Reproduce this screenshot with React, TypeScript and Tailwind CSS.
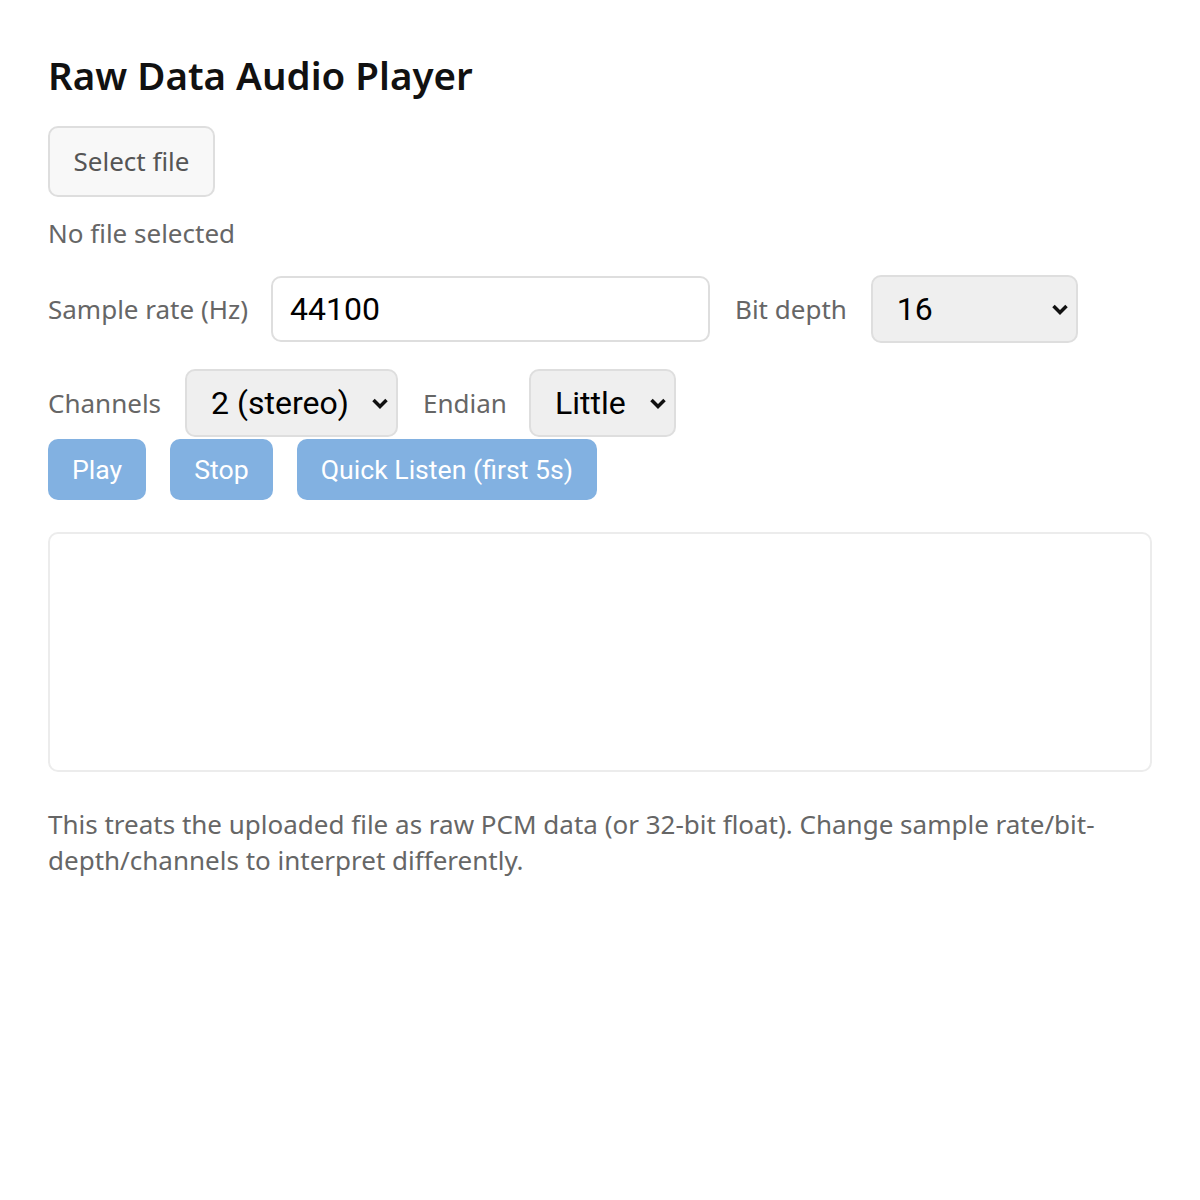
import { useState } from "react";

const label = "text-[26px] text-[#666] font-['Noto_Sans',sans-serif]";
const control = "font-['Roboto',sans-serif] text-[32px] text-black";

function Chevron() {
  return (
    <svg width="18" height="12" viewBox="0 0 18 12" className="pointer-events-none absolute right-[9px] top-1/2 -translate-y-1/2">
      <path d="M2.5 3 L9 9.5 L15.5 3" fill="none" stroke="#111" strokeWidth="3.5" />
    </svg>
  );
}

function Select({ value, options, width, onChange }: { value: string; options: string[]; width: string; onChange: (v: string) => void }) {
  return (
    <div className={`relative ${width}`}>
      <select
        value={value}
        onChange={(e) => onChange(e.target.value)}
        className={`${control} appearance-none w-full h-[68px] rounded-[10px] border-2 border-[#dedede] bg-[#efefef] pl-6 pr-10 outline-none`}>
        {options.map((o) => (
          <option key={o}>{o}</option>
        ))}
      </select>
      <Chevron />
    </div>
  );
}

export default function App() {
  const [rate, setRate] = useState("44100");
  const [depth, setDepth] = useState("16");
  const [channels, setChannels] = useState("2 (stereo)");
  const [endian, setEndian] = useState("Little");

  return (
    <div className="min-h-[1200px] bg-white px-12 pt-[46px] font-['Noto_Sans',sans-serif]">
      <h1 className="text-[38.5px] font-semibold text-[#111] leading-[58px]">Raw Data Audio Player</h1>

      <button className="mt-[22px] h-[71px] w-[167px] rounded-[10px] border-2 border-[#dedede] bg-[#f8f8f8] text-[26px] text-[#555]">
        Select file
      </button>
      <div className={`${label} mt-[16px] leading-[40px]`}>No file selected</div>

      <div className="mt-[22px] flex items-center">
        <span className={label}>Sample rate (Hz)</span>
        <input
          value={rate}
          onChange={(e) => setRate(e.target.value)}
          className={`${control} ml-[23px] h-[66px] w-[439px] rounded-[10px] border-2 border-[#dedede] bg-white px-[17px] outline-none`}
        />
        <span className={`${label} ml-[25px]`}>Bit depth</span>
        <div className="ml-[24px]">
          <Select value={depth} options={["8", "16", "24", "32"]} width="w-[207px]" onChange={setDepth} />
        </div>
      </div>

      <div className="mt-[26px] flex items-center">
        <span className={label}>Channels</span>
        <div className="ml-[24px]">
          <Select value={channels} options={["1 (mono)", "2 (stereo)"]} width="w-[213px]" onChange={setChannels} />
        </div>
        <span className={`${label} ml-[25px]`}>Endian</span>
        <div className="ml-[22px]">
          <Select value={endian} options={["Little", "Big"]} width="w-[147px]" onChange={setEndian} />
        </div>
      </div>

      <div className="mt-[2px] flex gap-6">
        {["Play", "Stop", "Quick Listen (first 5s)"].map((b) => (
          <button key={b} className="h-[61px] rounded-[10px] bg-[#82b1e1] px-6 font-['Roboto',sans-serif] text-[26.67px] text-white">
            {b}
          </button>
        ))}
      </div>

      <div className="mt-[32px] h-[240px] w-[1104px] rounded-[10px] border-2 border-[#ececec]"></div>

      <p className={`${label} mt-[34px] w-[1104px] leading-[36px]`}>
        This treats the uploaded file as raw PCM data (or 32-bit float). Change sample rate/bit-depth/channels to interpret differently.
      </p>
    </div>
  );
}
